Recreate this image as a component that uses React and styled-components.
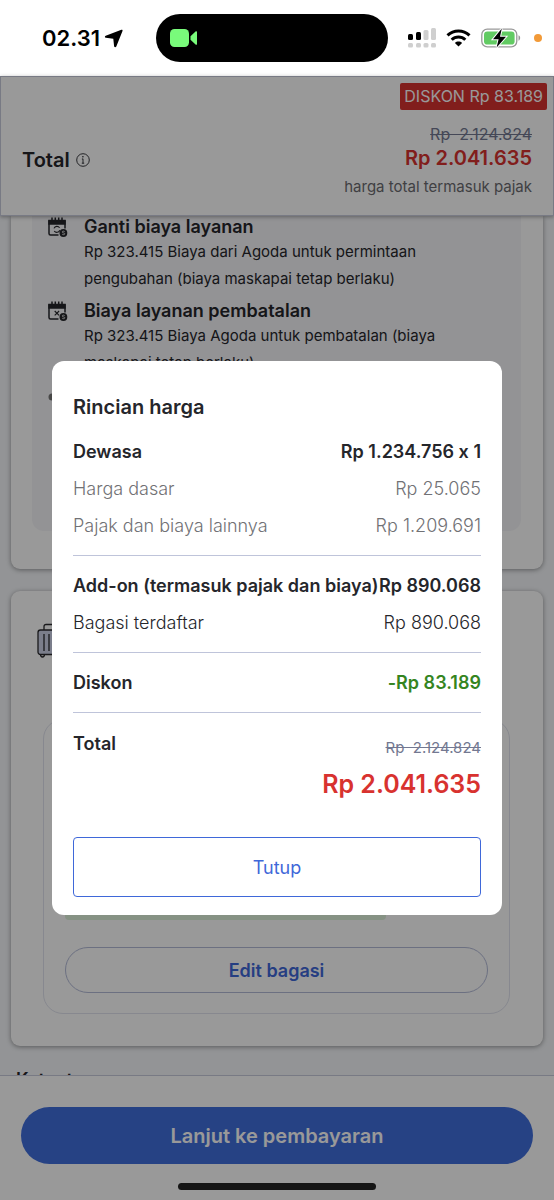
import styled, { createGlobalStyle, css } from "styled-components";

const changeFees = [
  {
    icon: "change",
    title: "Ganti biaya layanan",
    text: "Rp 323.415 Biaya dari Agoda untuk permintaan pengubahan (biaya maskapai tetap berlaku)",
  },
  {
    icon: "cancel",
    title: "Biaya layanan pembatalan",
    text: "Rp 323.415 Biaya Agoda untuk pembatalan (biaya maskapai tetap berlaku)",
  },
];

const priceSections = [
  [
    { label: "Dewasa", value: "Rp 1.234.756 x 1", kind: "strong" },
    { label: "Harga dasar", value: "Rp 25.065", kind: "muted" },
    { label: "Pajak dan biaya lainnya", value: "Rp 1.209.691", kind: "muted" },
  ],
  [
    { label: "Add-on (termasuk pajak dan biaya)", value: "Rp 890.068", kind: "strong" },
    { label: "Bagasi terdaftar", value: "Rp 890.068", kind: "normal" },
  ],
  [{ label: "Diskon", value: "-Rp 83.189", kind: "strong", discount: true }],
];

function CalendarIcon({ type }) {
  return (
    <svg width="20" height="22" viewBox="0 0 20 22" fill="none" stroke="#25262b" strokeWidth="1.5">
      <path d="M10.5 19H2.500A1.500 1.500 0 0 1 1 17.500V5h16v7.500" />
      <path d="M1 4.500h16v3.500H1z" fill="#25262b" />
      <path d="M4 1.500v4M7.300 1.500v4M10.700 1.500v4M14 1.500v4" />
      {type === "cancel" ? (
        <path d="M6.700 11l4.400 4.400M11.100 11l-4.400 4.400" strokeWidth="1.100" />
      ) : (
        <path d="M6 12.400a3.200 3.200 0 0 1 5.600-.7M11.800 14.200a3.200 3.200 0 0 1-5.600.8" strokeWidth="1.100" />
      )}
      <circle cx="15.400" cy="17" r="3.900" fill="#25262b" stroke="none" />
      <path d="M16.700 15.600c-.6-.7-2.500-.6-2.500.4 0 1.100 2.600.7 2.600 1.800 0 1.100-2.100 1.100-2.700.3" stroke="#eee" strokeWidth=".8" />
    </svg>
  );
}

function SuitcaseIcon() {
  return (
    <svg width="46" height="36" viewBox="0 0 46 36" fill="none" stroke="#2a2a2e" strokeWidth="1.300">
      <path d="M7 7V3.500C7 2.200 7.800 1.500 9 1.500h28" />
      <path d="M3.500 31.500c0 3.300 4 3.300 4 0" />
      <rect x="1" y="7" width="44" height="24.500" rx="2.500" fill="#cdd3e8" />
      <path d="M7 11v17M12 11v17M17 11v17" />
    </svg>
  );
}

export default function App() {
  return (
    <Screen>
      <GlobalStyle />
      <StatusBar>
        <Clock>
          02.31
          <svg width="19" height="19" viewBox="0 0 19 19">
            <path d="M17.400.8 1.700 6.700c-1.200.5-1 1.900.2 2.100l7.400 1 .8 7.400c.2 1.300 1.700 1.500 2.200.3L18.500 2c.3-.9-.3-1.500-1.100-1.200z" />
          </svg>
        </Clock>
        <Island>
          <svg width="28" height="18" viewBox="0 0 28 18" fill="#79fb7b">
            <rect width="19" height="18" rx="4.500" />
            <path d="M20.500 7.200 25.500 2.600c.8-.7 1.500-.4 1.500.5v11.800c0 .9-.7 1.200-1.500.5l-5-4.600z" />
          </svg>
        </Island>
        <Signals>
          <svg width="28" height="20" viewBox="0 0 28 20" fill="#cfcfcf">
            <rect x="0" y="6" width="5" height="6" rx="1.500" fill="#000" />
            <rect x="8" y="4" width="5" height="8" rx="1.500" fill="#000" />
            <rect x="15.500" y="2" width="5" height="10" rx="1.500" />
            <rect x="23" y="0" width="5" height="12" rx="1.500" />
            <rect x="0" y="15" width="5" height="4.500" rx="1.500" />
            <rect x="8" y="15" width="5" height="4.500" rx="1.500" />
            <rect x="15.500" y="15" width="5" height="4.500" rx="1.500" />
            <rect x="23" y="15" width="5" height="4.500" rx="1.500" />
          </svg>
          <svg width="25" height="18" viewBox="0 0 25 18" fill="none" stroke="#000" strokeWidth="3">
            <path d="M1.500 6.300c6.200-5.900 15.800-5.900 22 0" />
            <path d="M5.700 10.700c3.800-3.700 9.800-3.700 13.600 0" />
            <path d="M8.900 13.900c2-1.800 5.200-1.800 7.200 0L12.500 17.500z" fill="#000" stroke="none" />
          </svg>
          <svg width="40" height="20" viewBox="0 0 40 20">
            <rect x=".8" y="1.200" width="35" height="17.600" rx="5.500" fill="none" stroke="#999" strokeWidth="1.300" />
            <rect x="3" y="3.400" width="30.600" height="13.200" rx="3.400" fill="#62cb63" />
            <path d="M37.500 7.300c2.200.8 2.200 4.600 0 5.400z" fill="#999" />
            <path d="M20.800.6 12 11.200h5.600l-2 8.200 9.400-10.700h-6z" stroke="#fff" strokeWidth="2" paintOrder="stroke" />
          </svg>
          <RecordingDot />
        </Signals>
      </StatusBar>

      <Page>
        <TotalHeader>
          <HeaderLabel>
            Total
            <svg width="14" height="14" viewBox="0 0 14 14" fill="none" stroke="#25262b">
              <circle cx="7" cy="7" r="6.300" strokeWidth=".9" />
              <path d="M7 5.800v4.500M5.900 6h1.100M5.800 10.200h2.400" strokeWidth=".9" />
              <circle cx="6.900" cy="3.700" r=".8" fill="#25262b" stroke="none" />
            </svg>
          </HeaderLabel>
          <HeaderPrice>
            <DiscountBadge>DISKON Rp 83.189</DiscountBadge>
            <OldPrice>Rp&nbsp; 2.124.824</OldPrice>
            <CurrentPrice>Rp 2.041.635</CurrentPrice>
            <PriceNote>harga total termasuk pajak</PriceNote>
          </HeaderPrice>
        </TotalHeader>

        <Content>
          <PolicyCard>
            <PolicyPanel>
              {changeFees.map((fee) => (
                <PolicyRow key={fee.title}>
                  <CalendarIcon type={fee.icon} />
                  <div>
                    <h3>{fee.title}</h3>
                    <p>{fee.text}</p>
                  </div>
                </PolicyRow>
              ))}
              <PolicyRow>
                <svg width="20" height="26" viewBox="0 0 20 26">
                  <circle cx="4" cy="13" r="3.500" fill="#777" />
                </svg>
              </PolicyRow>
            </PolicyPanel>
          </PolicyCard>

          <BaggageCard>
            <SuitcaseIcon />
            <BaggageBox>
              <IncludedBar />
              <EditButton type="button">Edit bagasi</EditButton>
            </BaggageBox>
          </BaggageCard>
          <NotesTitle>Ketentuan</NotesTitle>
        </Content>

        <Footer>
          <PayButton type="button">Lanjut ke pembayaran</PayButton>
        </Footer>

        <Overlay>
          <Modal role="dialog" aria-labelledby="price-title">
            <h2 id="price-title">Rincian harga</h2>
            {priceSections.map((rows, i) => (
              <PriceSection key={i}>
                {rows.map((row) => (
                  <PriceRow key={row.label} $kind={row.kind}>
                    <dt>{row.label}</dt>
                    <PriceValue $discount={row.discount}>{row.value}</PriceValue>
                  </PriceRow>
                ))}
              </PriceSection>
            ))}
            <TotalRow>
              <TotalLabel>Total</TotalLabel>
              <TotalPrices>
                <OldPrice $large>Rp&nbsp; 2.124.824</OldPrice>
                <CurrentPrice $large>Rp 2.041.635</CurrentPrice>
              </TotalPrices>
            </TotalRow>
            <CloseButton type="button">Tutup</CloseButton>
          </Modal>
          <HomeIndicator />
        </Overlay>
      </Page>
    </Screen>
  );
}

const GlobalStyle = createGlobalStyle`
  * {
    box-sizing: border-box;
    margin: 0;
    padding: 0;
  }
  body {
    font-family: Inter, "Liberation Sans", sans-serif;
    font-feature-settings: "calt" 0;
    color: #25262b;
    background: #fff;
  }
  button {
    font-family: inherit;
    cursor: pointer;
  }
  svg {
    display: block;
    flex-shrink: 0;
  }
`;

const Screen = styled.div`
  display: flex;
  flex-direction: column;
  height: 100vh;
`;

const StatusBar = styled.div`
  display: flex;
  align-items: center;
  height: 76px;
  padding: 0 12px 0 42px;
  flex-shrink: 0;
`;

const Clock = styled.div`
  display: flex;
  align-items: center;
  gap: 4px;
  width: 114px;
  font-size: 22px;
  font-weight: 600;
  color: #000;
`;

const Island = styled.div`
  display: flex;
  align-items: center;
  flex: 1;
  height: 48px;
  padding-left: 14px;
  border-radius: 24px;
  background: #000;
`;

const Signals = styled.div`
  display: flex;
  align-items: center;
  gap: 10px;
  margin-left: 20px;
`;

const RecordingDot = styled.span`
  width: 8px;
  height: 8px;
  margin-left: 3px;
  border-radius: 50%;
  background: #f29a38;
`;

const Page = styled.main`
  position: relative;
  display: flex;
  flex-direction: column;
  flex: 1;
  min-height: 0;
`;

const TotalHeader = styled.header`
  position: relative;
  z-index: 1;
  display: flex;
  justify-content: space-between;
  height: 140px;
  padding: 6px 21px 0;
  flex-shrink: 0;
  background: #fff;
  border: 1px solid #c8cbdc;
  box-shadow: 0 1px 4px rgba(0, 0, 0, 0.35);
`;

const HeaderLabel = styled.div`
  display: flex;
  align-items: center;
  gap: 6px;
  height: 154px;
  font-size: 20px;
  font-weight: 600;
`;

const HeaderPrice = styled.div`
  display: flex;
  flex-direction: column;
  align-items: flex-end;
`;

const DiscountBadge = styled.span`
  margin: 0 -15px 13px 0;
  padding: 0 4px;
  font-size: 16px;
  line-height: 27px;
  color: #fff;
  background: #d8322f;
  border-radius: 2px;
`;

const OldPrice = styled.s`
  font-size: 16px;
  line-height: 22px;
  color: #737891;

  ${(props) =>
    props.$large &&
    css`
      font-size: 15px;
      line-height: 30px;
    `}
`;

const CurrentPrice = styled.strong`
  font-size: 20px;
  font-weight: 600;
  line-height: 27px;
  color: #d8322f;

  ${(props) =>
    props.$large &&
    css`
      font-size: 25px;
      line-height: 42px;
    `}
`;

const PriceNote = styled.span`
  font-size: 15px;
  line-height: 30px;
  color: #6b6b70;
`;

const Content = styled.div`
  flex: 1;
  min-height: 0;
  padding: 0 11px;
  overflow: hidden;
  background: #f5f7fa;
`;

const Card = styled.section`
  background: #fff;
  box-shadow: 0 1px 5px rgba(0, 0, 0, 0.4);
`;

const PolicyCard = styled(Card)`
  padding: 0 22px 38px 21px;
  border-radius: 0 0 9px 9px;
`;

const PolicyPanel = styled.div`
  min-height: 315px;
  padding: 0 16px;
  border-radius: 0 0 12px 12px;
  background: #f5f5f8;
`;

const PolicyRow = styled.div`
  display: flex;
  gap: 16px;
  margin-bottom: 8px;

  h3 {
    font-size: 18px;
    font-weight: 600;
    line-height: 22px;
  }
  p {
    max-width: 376px;
    font-size: 15px;
    line-height: 27px;
  }
`;

const BaggageCard = styled(Card)`
  display: flex;
  flex-direction: column;
  gap: 60px;
  margin-top: 22px;
  padding: 32px 33px 32px 26px;
  border-radius: 9px;
`;

const BaggageBox = styled.div`
  margin-left: 6px;
  padding: 0 21px 20px;
  border: 1px solid #e1e3ee;
  border-radius: 20px;
`;

const IncludedBar = styled.div`
  width: 76%;
  height: 40px;
  margin: 160px 0 27px;
  border-radius: 4px;
  background: #e0f4dc;
`;

const EditButton = styled.button`
  width: 100%;
  height: 46px;
  font-size: 18px;
  font-weight: 600;
  color: #3f68d9;
  background: transparent;
  border: 1px solid #b4bbd8;
  border-radius: 23px;
`;

const NotesTitle = styled.h3`
  margin: 23px 0 0 5px;
  font-size: 18px;
  font-weight: 600;
  line-height: 22px;
`;

const Footer = styled.footer`
  height: 125px;
  padding: 31px 21px 0;
  flex-shrink: 0;
  background: #fff;
  border-top: 1px solid #c8cbdc;
`;

const PayButton = styled.button`
  width: 100%;
  height: 57px;
  font-size: 20px;
  font-weight: 600;
  color: #fff;
  background: #406edd;
  border: none;
  border-radius: 29px;
`;

const Overlay = styled.div`
  position: absolute;
  inset: 0;
  z-index: 2;
  display: flex;
  align-items: center;
  padding: 0 52px;
  background: rgba(0, 0, 0, 0.4);
`;

const Modal = styled.div`
  width: 100%;
  padding: 31px 21px 18px;
  background: #fff;
  border-radius: 12px;

  h2 {
    font-size: 20px;
    font-weight: 600;
    line-height: 30px;
  }
`;

const PriceSection = styled.dl`
  padding: 11px 0;
  border-bottom: 1px solid #bfc4da;
`;

const PriceRow = styled.div`
  display: flex;
  justify-content: space-between;
  font-size: 18px;
  font-weight: ${(props) => (props.$kind === "strong" ? 600 : 300)};
  line-height: 37px;
  white-space: nowrap;
  color: ${(props) => (props.$kind === "muted" ? "#717175" : "#25262b")};
`;

const PriceValue = styled.dd`
  color: ${(props) => (props.$discount ? "#35851f" : "inherit")};
`;

const TotalRow = styled.div`
  display: flex;
  justify-content: space-between;
  padding-top: 12px;
`;

const TotalLabel = styled.span`
  font-size: 18px;
  font-weight: 600;
  line-height: 37px;
`;

const TotalPrices = styled.div`
  display: flex;
  flex-direction: column;
  align-items: flex-end;
  padding-top: 8px;
`;

const CloseButton = styled.button`
  width: 100%;
  height: 60px;
  margin-top: 32px;
  font-size: 18px;
  color: #3f68d9;
  background: #fff;
  border: 1px solid #3f68d9;
  border-radius: 4px;
`;

const HomeIndicator = styled.div`
  position: absolute;
  bottom: 10px;
  left: 50%;
  width: 198px;
  height: 7px;
  margin-left: -99px;
  border-radius: 4px;
  background: #151515;
`;
